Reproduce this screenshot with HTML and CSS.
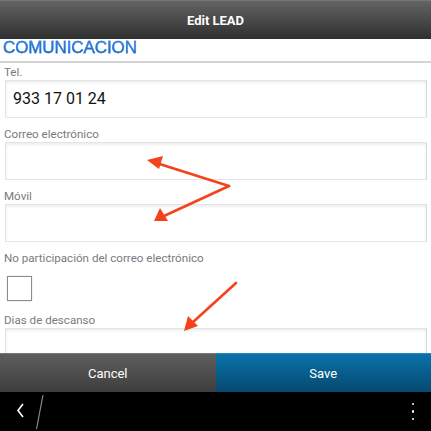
FILE: index.html
```html
<!DOCTYPE html>
<html lang="es">
<head>
<meta charset="utf-8">
<title>Edit LEAD</title>
<link rel="stylesheet" href="styles.css">
</head>
<body>
<div class="screen">
  <header class="titlebar">Edit LEAD</header>
  <main class="content">
    <h2 class="section">COMUNICACION</h2>
    <div class="field first">
      <label class="label">Tel.</label>
      <div class="input">933 17 01 24</div>
    </div>
    <div class="field">
      <label class="label">Correo electrónico</label>
      <div class="input"></div>
    </div>
    <div class="field">
      <label class="label">Móvil</label>
      <div class="input"></div>
    </div>
    <div class="field">
      <label class="label">No participación del correo electrónico</label>
      <div class="checkbox"></div>
    </div>
    <div class="field after-check">
      <label class="label">Dias de descanso</label>
      <div class="input"></div>
    </div>
  </main>
  <footer class="actions">
    <button class="btn cancel">Cancel</button>
    <button class="btn save">Save</button>
  </footer>
  <nav class="navbar">
    <svg class="back" width="60" height="39" viewBox="0 0 60 39">
      <polyline points="23,12 18,18.5 23,25" fill="none" stroke="#fff" stroke-width="1.6"/>
      <line x1="43" y1="3" x2="36.5" y2="37" stroke="#8a8a8a" stroke-width="1.2"/>
    </svg>
    <div class="more"><span></span><span></span><span></span></div>
  </nav>
  <svg class="annot" width="431" height="431" viewBox="0 0 431 431">
    <g stroke="#f4431c" stroke-width="2.6" fill="none" stroke-linecap="round">
      <line x1="229" y1="186" x2="158" y2="163.5"/>
      <line x1="229" y1="186" x2="164" y2="216"/>
      <line x1="236" y1="283" x2="192" y2="323"/>
    </g>
    <g fill="#f4431c">
      <polygon points="147,160 163,156 159,169"/>
      <polygon points="154,221 160,208 168,221"/>
      <polygon points="184,331 188,316 198,326"/>
    </g>
  </svg>
</div>
</body>
</html>
```
FILE: styles.css
```css
* { box-sizing: border-box; }
html, body { margin: 0; padding: 0; }
body {
  width: 431px;
  height: 431px;
  overflow: hidden;
  font-family: Roboto, "Noto Sans", sans-serif;
  background: #fff;
}
.screen {
  position: relative;
  width: 431px;
  height: 431px;
  display: flex;
  flex-direction: column;
}
.titlebar {
  height: 39px;
  flex: none;
  background: linear-gradient(#636363, #2f2f2f);
  color: #fff;
  font-weight: bold;
  font-size: 13px;
  display: flex;
  align-items: center;
  justify-content: center;
  border-top: 1px solid #777;
}
.content {
  flex: 1;
  overflow: hidden;
  display: flex;
  flex-direction: column;
}
.section {
  margin: 0;
  height: 24px;
  padding: 0 0 0 3px;
  font-family: "Liberation Sans", Arial, sans-serif;
  font-weight: normal;
  font-size: 17px;
  line-height: 17px;
  letter-spacing: -0.1px;
  color: #1a6fd2;
  background: linear-gradient(#3a8ce4, #0a56c2);
  -webkit-background-clip: text;
  background-clip: text;
  -webkit-text-fill-color: transparent;
  -webkit-text-stroke: 0.3px #1a6fd2;
  border-bottom: 2px solid #d4d4d4;
  flex: none;
}
.field { display: flex; flex-direction: column; flex: none; }
.label {
  display: block;
  padding: 9px 0 0 4px;
  height: 24px;
  font-size: 11.6px;
  line-height: 15px;
  color: #7a7a7a;
}
.field.first .label { padding-top: 2px; height: 17px; }
.field.after-check .label { padding-top: 12px; height: 27px; }
.input {
  margin: 0 4px 0 5px;
  height: 38px;
  background: #fff;
  border: 1px solid #e4e4e4;
  border-right-color: #d8d8d8;
  box-shadow: inset 0 2px 3px rgba(0, 0, 0, 0.07);
  padding-left: 7px;
  font-size: 16px;
  line-height: 36px;
  color: #111;
}
.checkbox {
  margin: 10px 0 0 7px;
  width: 25px;
  height: 25px;
  border: 1.5px solid #8c8c8c;
  box-shadow: 0 0 2px rgba(0, 0, 0, 0.15);
  background: #fff;
}
.actions {
  height: 39px;
  flex: none;
  display: flex;
}
.btn {
  flex: 1;
  border: 0;
  margin: 0;
  padding: 0;
  color: #fff;
  font-family: Roboto, "Noto Sans", sans-serif;
  font-size: 13px;
}
.cancel {
  background: linear-gradient(#5e5e5e, #3e3e3e);
  border-top: 1px solid #777;
}
.save {
  background: linear-gradient(#0a72aa, #06496f);
  border-top: 1px solid #2a8ac0;
}
.navbar {
  height: 39px;
  flex: none;
  background: #000;
  display: flex;
  justify-content: space-between;
  align-items: center;
}
.back { display: block; }
.more {
  width: 20px;
  margin-right: 8px;
  display: flex;
  flex-direction: column;
  align-items: center;
  gap: 5px;
}
.more span {
  width: 2.5px;
  height: 2.5px;
  background: #fff;
  border-radius: 50%;
}
.annot {
  position: absolute;
  left: 0;
  top: 0;
  pointer-events: none;
}
```
